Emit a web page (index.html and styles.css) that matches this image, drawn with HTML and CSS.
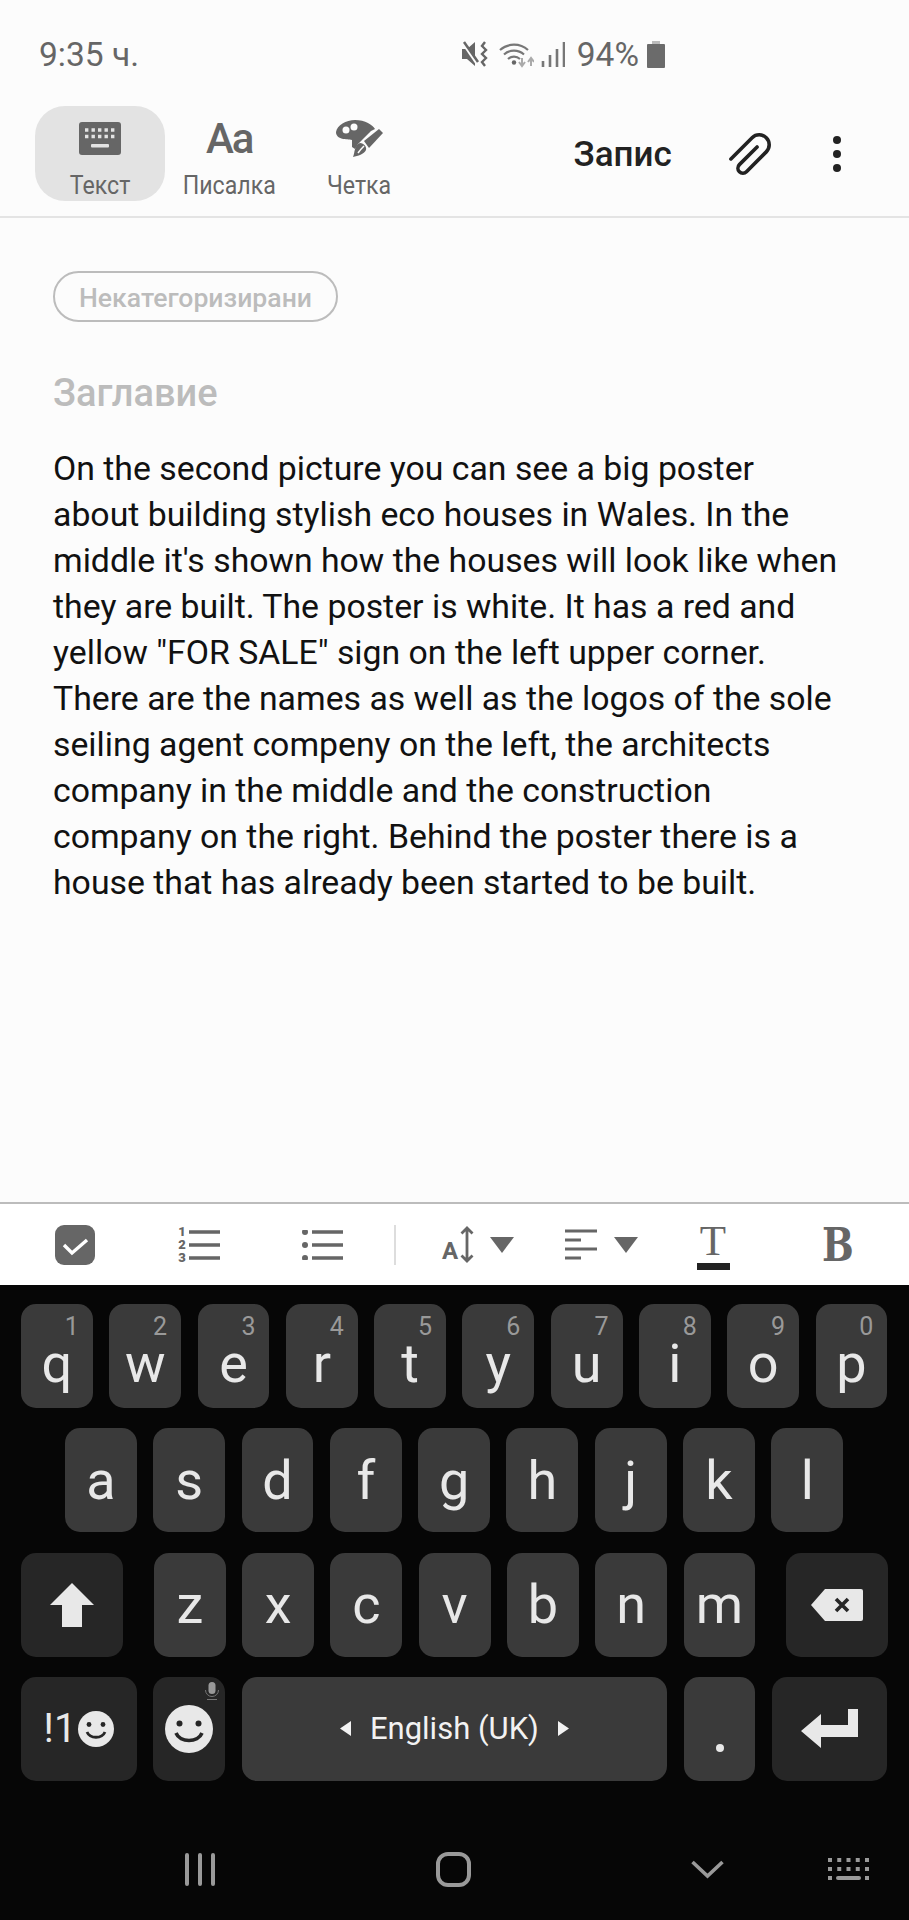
FILE: index.html
```html
<!DOCTYPE html>
<html lang="bg">
<head>
    <meta charset="UTF-8">
    <meta name="viewport" content="width=device-width, initial-scale=1.0">
    <title>Запис</title>
    <link rel="stylesheet" href="styles.css">
</head>
<body>

    <!-- status bar -->
    <div class="status">
        <span class="time">9:35 ч.</span>
        <div class="status-right">
            <svg class="st-mute" width="28" height="26" viewBox="0 0 28 26"><path d="M1 8h5l8-7v24l-8-7H1z" fill="#666"/><path d="M1 1l15 22" stroke="#fcfcfc" stroke-width="2.5"/><path d="M3 1l14 20" stroke="#666" stroke-width="2.5"/><path d="M24 1l-3 4 4 4-4 4 4 4-4 4 3 4" fill="none" stroke="#666" stroke-width="2.4"/></svg>
            <svg class="st-wifi" width="35" height="27" viewBox="0 0 35 27"><path d="M1 9a21 21 0 0 1 28 0M5 13.500a15 15 0 0 1 20 0M9 18a9 9 0 0 1 12 0" fill="none" stroke="#777" stroke-width="2.200"/><circle cx="15" cy="21.500" r="2.200" fill="#666"/><path d="M23 17v7M20 21l3 4 3-4M32 25v-7M29 21l3-4 3 4" fill="none" stroke="#aaa" stroke-width="2"/></svg>
            <svg class="st-signal" width="24" height="25" viewBox="0 0 24 25"><path d="M2 25v-6M9 25v-12M16 25V7M23 25V0" stroke="#777" stroke-width="2.600"/></svg>
            <span class="pct">94%</span>
            <svg class="st-batt" width="18" height="27" viewBox="0 0 18 27"><rect x="5" y="0" width="8" height="4" fill="#bbb"/><rect x="0" y="3" width="18" height="24" rx="1" fill="#6b6b6b"/></svg>
        </div>
    </div>

    <!-- top toolbar -->
    <div class="toolbar">
        <div class="tab active">
            <svg width="42" height="33" viewBox="0 0 42 33"><rect width="42" height="33" rx="3" fill="#666"/><path d="M6 8h30M6 14.500h30" stroke="#e3e3e3" stroke-width="3.400" stroke-dasharray="3.400 3.100"/><rect x="12" y="22" width="18" height="3.400" rx="1" fill="#e3e3e3"/></svg>
            <span class="tab-label">Текст</span>
        </div>
        <div class="tab">
            <span class="pen-icon">Aa</span>
            <span class="tab-label">Писалка</span>
        </div>
        <div class="tab">
            <svg width="50" height="37" viewBox="0 0 50 37"><path d="M2 12C3 5 12 0 21 0c10 0 18 5 20 9l-4 2-13 13-3 5-3-2 0-7c-5-1-16 0-16-8z" fill="#666"/><circle cx="12" cy="10" r="3.500" fill="#fcfcfc"/><circle cx="20" cy="7" r="3.500" fill="#fcfcfc"/><path d="M30 21L45 9l4 4-14 15z" fill="#666"/><path d="M26 23c4 0 7 4 6 7-2 4-8 6-13 7 2-4 1-12 7-14z" fill="#666"/><path d="M24 33c2-3 4-5 6-7" stroke="#fcfcfc" stroke-width="1.500"/></svg>
            <span class="tab-label">Четка</span>
        </div>
        <span class="save">Запис</span>
        <svg class="clip" width="48" height="48" viewBox="0 0 48 48"><g transform="translate(24 25) rotate(45)"><path d="M-10 17V-13a10 10 0 0 1 20 0V15a5 5 0 0 1-10 0V-10" fill="none" stroke="#222" stroke-width="3.600" stroke-linecap="round"/></g></svg>
        <svg class="dots" width="10" height="38" viewBox="0 0 10 38"><circle cx="5" cy="5" r="4" fill="#222"/><circle cx="5" cy="19" r="4" fill="#222"/><circle cx="5" cy="33" r="4" fill="#222"/></svg>
    </div>

    <!-- note body -->
    <div class="note">
        <span class="pill">Некатегоризирани</span>
        <div class="note-title">Заглавие</div>
        <p class="note-text">On the second picture you can see a big poster<br>about building stylish eco houses in Wales. In the<br>middle it's shown how the houses will look like when<br>they are built. The poster is white. It has a red and<br>yellow "FOR SALE" sign on the left upper corner.<br>There are the names as well as the logos of the sole<br>seiling agent compeny on the left, the architects<br>company in the middle and the construction<br>company on the right. Behind the poster there is a<br>house that has already been started to be built.</p>
    </div>

    <!-- format bar -->
    <div class="format">
        <div class="fmt">
            <svg width="40" height="40" viewBox="0 0 40 40"><rect width="40" height="40" rx="9" fill="#666"/><path d="M9 20l8 8 15-13" fill="none" stroke="#fff" stroke-width="3.400"/></svg>
        </div>
        <div class="fmt list-icon">
            <span class="list-nums">1<br>2<br>3</span>
            <svg width="31" height="30" viewBox="0 0 31 30"><path d="M0 2h31M0 15h31M0 28h31" stroke="#666" stroke-width="3.400"/></svg>
        </div>
        <div class="fmt list-icon">
            <svg width="41" height="30" viewBox="0 0 41 30"><circle cx="3" cy="2" r="3" fill="#666"/><circle cx="3" cy="15" r="3" fill="#666"/><circle cx="3" cy="28" r="3" fill="#666"/><path d="M10 2h31M10 15h31M10 28h31" stroke="#666" stroke-width="3.400"/></svg>
        </div>
        <div class="fmt"><span class="fmt-sep"></span></div>
        <div class="fmt size-icon">
            <span class="size-a">A</span>
            <svg class="size-arrow" width="14" height="37" viewBox="0 0 14 37"><path d="M7 2v33M1.500 7.500L7 2l5.500 5.500M1.500 29.500L7 35l5.500-5.500" fill="none" stroke="#666" stroke-width="2.800"/></svg>
            <svg class="caret" width="24" height="16" viewBox="0 0 24 16"><path d="M0 0h24L12 16z" fill="#666"/></svg>
        </div>
        <div class="fmt">
            <svg width="33" height="31" viewBox="0 0 33 31"><path d="M0 2h32M0 11h16M0 20h32M0 29h16" stroke="#666" stroke-width="3"/></svg>
            <svg class="caret" width="24" height="16" viewBox="0 0 24 16"><path d="M0 0h24L12 16z" fill="#666"/></svg>
        </div>
        <div class="fmt color-t">
            <span class="t-letter">T</span>
            <span class="t-bar"></span>
        </div>
        <div class="fmt"><span class="b-letter">B</span></div>
    </div>

    <!-- keyboard -->
    <div class="keyboard">
        <div class="kb-row row-top">
            <div class="key"><i>1</i>q</div>
            <div class="key"><i>2</i>w</div>
            <div class="key"><i>3</i>e</div>
            <div class="key"><i>4</i>r</div>
            <div class="key"><i>5</i>t</div>
            <div class="key"><i>6</i>y</div>
            <div class="key"><i>7</i>u</div>
            <div class="key"><i>8</i>i</div>
            <div class="key"><i>9</i>o</div>
            <div class="key"><i>0</i>p</div>
        </div>
        <div class="kb-row row-mid">
            <div class="key">a</div>
            <div class="key">s</div>
            <div class="key">d</div>
            <div class="key">f</div>
            <div class="key">g</div>
            <div class="key">h</div>
            <div class="key">j</div>
            <div class="key">k</div>
            <div class="key">l</div>
        </div>
        <div class="kb-row">
            <div class="key fn shift">
                <svg width="44" height="44" viewBox="0 0 44 44"><path d="M22 0l22 22H32v22H12V22H0z" fill="#e8e8e8"/></svg>
            </div>
            <div class="key">z</div>
            <div class="key">x</div>
            <div class="key">c</div>
            <div class="key">v</div>
            <div class="key">b</div>
            <div class="key">n</div>
            <div class="key">m</div>
            <div class="key fn del">
                <svg width="52" height="32" viewBox="0 0 52 32"><path d="M14 0h36a2 2 0 0 1 2 2v28a2 2 0 0 1-2 2H14L0 16z" fill="#e8e8e8"/><path d="M25 10l12 12M37 10L25 22" stroke="#262626" stroke-width="3.600"/></svg>
            </div>
        </div>
        <div class="kb-row">
            <div class="key fn sym">
                <span class="sym-text">!1</span>
                <svg width="36" height="36" viewBox="0 0 36 36"><circle cx="18" cy="18" r="18" fill="#e8e8e8"/><circle cx="11" cy="13.500" r="2.400" fill="#262626"/><circle cx="25" cy="13.500" r="2.400" fill="#262626"/><path d="M9 21c3 7 15 7 18 0" fill="none" stroke="#262626" stroke-width="2.800"/></svg>
            </div>
            <div class="key fn emoji">
                <svg class="mic" width="14" height="18" viewBox="0 0 14 18"><rect x="3.500" y="0" width="7" height="12" rx="3.500" fill="#999"/><path d="M0.500 8a6.500 6.500 0 0 0 13 0M2 17.500h10" fill="none" stroke="#777" stroke-width="1"/></svg>
                <svg class="face" width="48" height="48" viewBox="0 0 48 48"><circle cx="24" cy="24" r="24" fill="#e8e8e8"/><circle cx="14.500" cy="18.500" r="3" fill="#262626"/><circle cx="33.500" cy="18.500" r="3" fill="#262626"/><path d="M11 28c4 10 22 10 26 0" fill="none" stroke="#262626" stroke-width="3.600"/></svg>
            </div>
            <div class="key space">
                <svg width="11" height="15" viewBox="0 0 11 15"><path d="M0 7.500L11 0v15z" fill="#f2f2f2"/></svg>
                <span>English (UK)</span>
                <svg width="11" height="15" viewBox="0 0 11 15"><path d="M11 7.500L0 0v15z" fill="#f2f2f2"/></svg>
            </div>
            <div class="key period"><span class="dot"></span></div>
            <div class="key fn enter">
                <svg width="57" height="39" viewBox="0 0 57 39"><path d="M0 22L20 5v11h27V0h10v28H20v11z" fill="#e8e8e8"/></svg>
            </div>
        </div>
    </div>

    <!-- nav bar -->
    <div class="nav">
        <svg class="nav-back" width="32" height="33" viewBox="0 0 32 33"><path d="M3 2v29M16 2v29M29 2v29" stroke="#999" stroke-width="4" stroke-linecap="round"/></svg>
        <svg class="nav-home" width="35" height="35" viewBox="0 0 35 35"><rect x="2" y="2" width="31" height="31" rx="10" fill="none" stroke="#999" stroke-width="4"/></svg>
        <svg class="nav-down" width="33" height="19" viewBox="0 0 33 19"><path d="M1.500 2L16.500 16l15-14" fill="none" stroke="#999" stroke-width="3.600"/></svg>
        <svg class="nav-kb" width="41" height="22" viewBox="0 0 41 22"><path d="M0 2h41M0 11h41" stroke="#999" stroke-width="4" stroke-dasharray="4 5.250"/><path d="M0 20h4M37 20h4" stroke="#999" stroke-width="4"/><path d="M10 20h21" stroke="#999" stroke-width="4" stroke-linecap="round"/></svg>
    </div>

</body>
</html>
```

FILE: styles.css
```css
* {
    box-sizing: border-box;
}
body {
    margin: 0;
    width: 909px;
    height: 1920px;
    overflow: hidden;
    display: flex;
    flex-direction: column;
    font-family: Roboto, sans-serif;
    background-color: #fcfcfc;
}

/* status bar */
.status {
    height: 106px;
    flex: none;
    display: flex;
    justify-content: space-between;
    align-items: flex-start;
    padding: 35px 244px 0 39px;
    color: #666;
}
.time {
    margin-top: 1px;
    font-size: 33.500px;
    line-height: 38px;
}
.status-right {
    display: flex;
    align-items: center;
    height: 38px;
}
.st-wifi {
    margin-left: 10px;
}
.st-signal {
    margin-left: 7px;
}
.pct {
    font-size: 33.500px;
    margin-left: 12px;
}
.st-batt {
    margin-left: 8px;
}

/* toolbar */
.toolbar {
    height: 112px;
    flex: none;
    display: flex;
    align-items: flex-start;
    padding-left: 35px;
    border-bottom: 2px solid #e4e4e4;
}
.tab {
    width: 129.500px;
    height: 95px;
    display: flex;
    flex-direction: column;
    align-items: center;
    gap: 12px;
    padding-top: 14px;
    border-radius: 30px;
    font-size: 26px;
    line-height: 32px;
    color: #666;
}
.tab svg, .pen-icon {
    flex: none;
    height: 37px;
}
.tab-label {
    transform: scaleX(0.89);
}
.tab.active {
    background-color: #e3e3e3;
}
.pen-icon {
    font-weight: 500;
    font-size: 42px;
    line-height: 37px;
    letter-spacing: -2px;
}
.save {
    margin-left: 150px;
    margin-top: 28px;
    font-size: 35px;
    line-height: 42px;
    font-weight: 500;
    color: #222;
}
.clip {
    margin-left: 54px;
    margin-top: 23px;
}
.dots {
    margin-left: 58px;
    margin-top: 29px;
}

/* note */
.note {
    height: 984px;
    flex: none;
    padding: 53px 53px 0;
}
.pill {
    display: inline-block;
    height: 51px;
    line-height: 49px;
    padding: 0 24px;
    border: 2px solid #bcbcbc;
    border-radius: 26px;
    font-size: 26.600px;
    font-weight: 500;
    color: #bcbcbc;
}
.note-title {
    margin-top: 49px;
    font-size: 38px;
    line-height: 44px;
    font-weight: 500;
    color: #bcbcbc;
}
.note-text {
    margin: 31px 0 0;
    font-size: 33.800px;
    line-height: 46px;
    color: #111;
    white-space: nowrap;
}

/* format bar */
.format {
    height: 83px;
    flex: none;
    display: grid;
    grid-template-columns: 124px 124px 123px 22px 144px 102px 122px 128px;
    padding-left: 13px;
    border-top: 2px solid #bcbcbc;
    background-color: #fff;
}
.fmt {
    display: flex;
    align-items: center;
    justify-content: center;
}
.list-nums {
    font-size: 13px;
    line-height: 13px;
    font-weight: 900;
    color: #666;
    margin-right: 3px;
}
.fmt-sep {
    width: 2px;
    height: 40px;
    background-color: #ddd;
}
.size-a {
    font-size: 24px;
    font-weight: 700;
    color: #666;
    margin-top: 12px;
}
.size-arrow {
    margin-left: 2px;
}
.caret {
    margin-left: 16px;
}
.color-t {
    flex-direction: column;
    padding-top: 4px;
}
.t-letter {
    font-family: "Liberation Serif", serif;
    font-size: 43px;
    line-height: 36px;
    color: #666;
}
.t-bar {
    width: 33px;
    height: 7px;
    margin-top: 4px;
    background-color: #222;
}
.b-letter {
    font-family: "DejaVu Serif", serif;
    font-weight: bold;
    font-size: 47px;
    color: #666;
    transform: scaleX(0.8);
}

/* keyboard */
.keyboard {
    flex: none;
    display: flex;
    flex-direction: column;
    gap: 20.300px;
    padding: 19px 21px 0;
    background-color: #060606;
}
.kb-row {
    display: flex;
    gap: 16.400px;
}
.row-mid {
    padding-left: 44px;
}
.key {
    position: relative;
    flex: none;
    width: 71.900px;
    height: 104px;
    display: flex;
    align-items: center;
    justify-content: center;
    border-radius: 15px;
    background-color: #3a3a3a;
    color: #e8e8e8;
    font-size: 54px;
}
.row-top .key {
    padding-top: 16px;
    line-height: 46px;
}
.key i {
    position: absolute;
    top: 10px;
    right: 14px;
    font-style: normal;
    font-size: 25px;
    line-height: 26px;
    color: #999;
}
.key.fn {
    background-color: #262626;
}
.shift {
    width: 102px !important;
    margin-right: 14.500px;
}
.del {
    width: 101.500px !important;
    margin-left: 14.500px;
}
.sym {
    width: 116px !important;
    gap: 2px;
    justify-content: center;
}
.sym-text {
    font-size: 40px;
}
.mic {
    position: absolute;
    top: 5px;
    right: 6px;
}
.space {
    width: 425.500px;
    gap: 19px;
    font-size: 31px;
    color: #f2f2f2;
}
.period {
    align-items: flex-end;
    padding-bottom: 29px;
}
.dot {
    width: 8px;
    height: 8px;
    border-radius: 50%;
    background-color: #e8e8e8;
}
.enter {
    width: 115px !important;
}

/* nav */
.nav {
    flex: 1;
    display: flex;
    align-items: center;
    padding: 38px 0 0 184px;
    background-color: #060606;
}
.nav-home {
    margin-left: 220px;
}
.nav-down {
    margin-left: 219.500px;
}
.nav-kb {
    margin-left: 104px;
}
```
